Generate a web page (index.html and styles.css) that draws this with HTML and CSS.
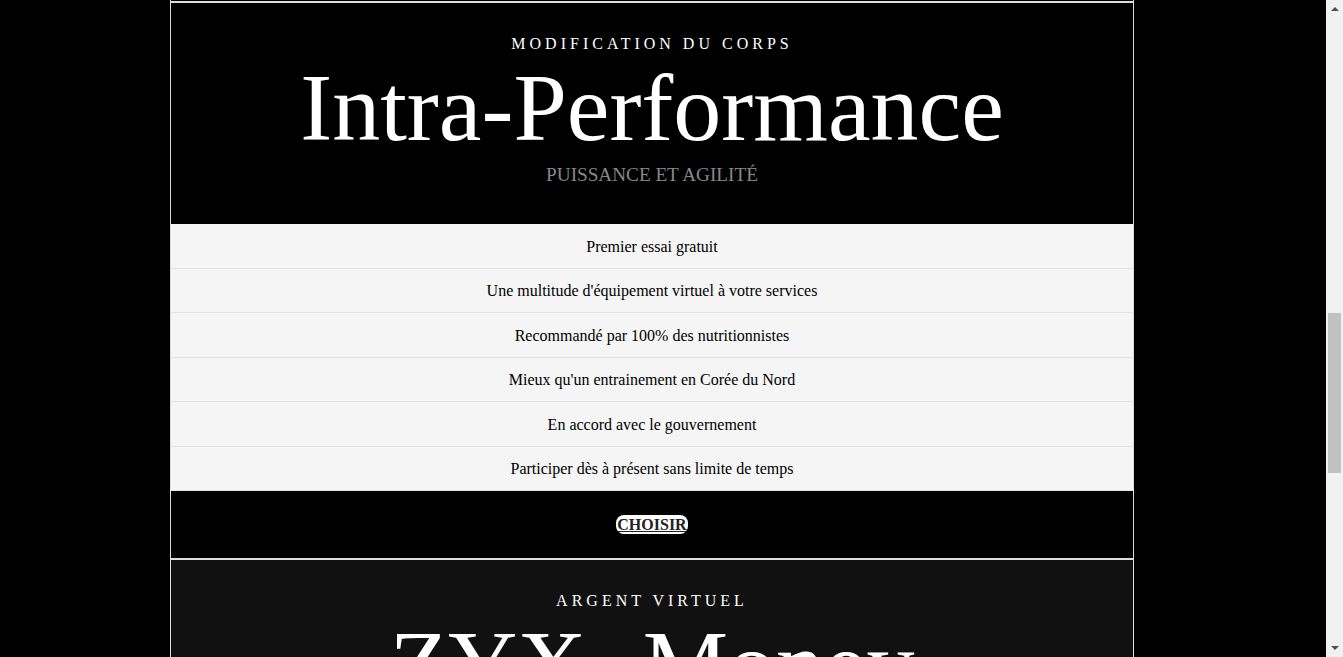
FILE: index.html
```html
<!DOCTYPE html>
<html lang="fr">
<head>
<meta charset="utf-8">
<title>Offres</title>
<link rel="stylesheet" href="styles.css">
</head>
<body>
<main class="pricing">
  <div class="prev-card"></div>
  <section class="plan">
    <header class="plan-head">
      <p class="plan-label">MODIFICATION DU CORPS</p>
      <h2 class="plan-title">Intra-Performance</h2>
      <p class="plan-sub">PUISSANCE ET AGILITÉ</p>
    </header>
    <ul class="plan-features">
      <li>Premier essai gratuit</li>
      <li>Une multitude d'équipement virtuel à votre services</li>
      <li>Recommandé par 100% des nutritionnistes</li>
      <li>Mieux qu'un entrainement en Corée du Nord</li>
      <li>En accord avec le gouvernement</li>
      <li>Participer dès à présent sans limite de temps</li>
    </ul>
    <div class="plan-foot"><a class="plan-btn" href="#">CHOISIR</a></div>
  </section>
  <section class="plan plan-alt">
    <header class="plan-head">
      <p class="plan-label">ARGENT VIRTUEL</p>
      <h2 class="plan-title">ZYX- Money</h2>
    </header>
  </section>
</main>
<div class="scrollbar">
  <span class="sb-up"></span>
  <span class="sb-thumb"></span>
  <span class="sb-down"></span>
</div>
</body>
</html>
```
FILE: styles.css
```css
html, body {
  margin: 0;
  height: 657px;
  overflow: hidden;
  background: #000;
  font-family: "Liberation Serif", "Times New Roman", serif;
}

.pricing {
  width: 964px;
  margin-left: 170px;
}

.prev-card {
  height: 1px;
  border: 1px solid #ddd;
  border-top: 0;
  background: #000;
}

.plan {
  border: 1px solid #ddd;
  background: #000;
  color: #fff;
  text-align: center;
}

.plan-alt {
  background: #111;
  height: 400px;
}

.plan-head {
  padding: 32px 0 38px;
}

.plan-label {
  margin: 0;
  font-size: 16px;
  line-height: 18px;
  letter-spacing: 4px;
}

.plan-title {
  margin: 0;
  font-size: 96px;
  font-weight: normal;
  line-height: 110px;
}

.plan-sub {
  margin: 0;
  padding-top: 1px;
  font-size: 19.2px;
  line-height: 22px;
  color: #888;
}

.plan-features {
  list-style: none;
  margin: 0;
  padding: 0;
  background: #f5f5f5;
  color: #000;
  font-size: 16px;
}

.plan-features li {
  padding: 13.5px 0 12.5px;
  line-height: 17.5px;
  border-bottom: 1px solid #e3e3e3;
}

.plan-foot {
  padding: 24px 0;
  line-height: 19px;
}

.plan-btn {
  display: inline-block;
  vertical-align: top;
  background: #fff;
  color: #222;
  font-size: 16px;
  font-weight: bold;
  line-height: 19px;
  padding: 0 1px;
  border-radius: 8px;
  text-decoration: underline;
}

.scrollbar {
  position: fixed;
  top: 0;
  right: 0;
  width: 17px;
  height: 657px;
  background: #f1f1f1;
}

.sb-up,
.sb-down {
  position: absolute;
  left: 5px;
  width: 0;
  height: 0;
  border-left: 4px solid transparent;
  border-right: 4px solid transparent;
}

.sb-up {
  top: 7px;
  border-bottom: 4px solid #505050;
}

.sb-down {
  top: 646px;
  border-top: 4px solid #505050;
}

.sb-thumb {
  position: absolute;
  left: 2px;
  top: 313px;
  width: 13px;
  height: 160px;
  background: #c1c1c1;
}
```
